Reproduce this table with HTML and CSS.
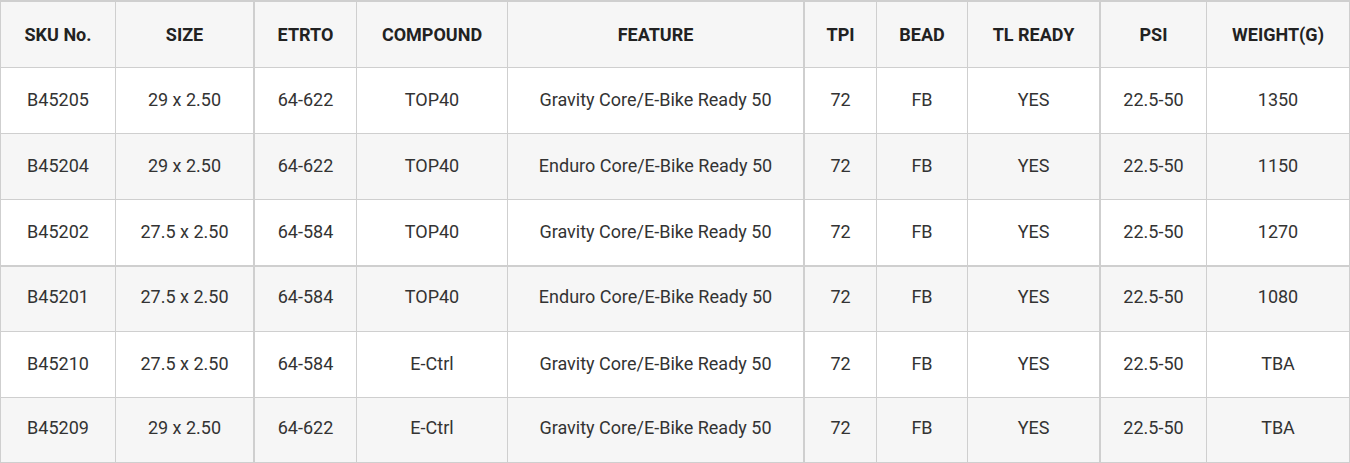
FILE: index.html
```html
<!DOCTYPE html>
<html lang="en">
<head>
<meta charset="utf-8">
<title>Tire specifications</title>
<link rel="stylesheet" href="styles.css">
</head>
<body>
<table class="spec">
  <colgroup>
    <col class="c1"><col class="c2"><col class="c3"><col class="c4"><col class="c5">
    <col class="c6"><col class="c7"><col class="c8"><col class="c9"><col class="c10">
  </colgroup>
  <thead>
    <tr class="r-head">
      <th>SKU No.</th><th class="thick">SIZE</th><th>ETRTO</th><th>COMPOUND</th><th class="thick">FEATURE</th>
      <th>TPI</th><th>BEAD</th><th class="thick">TL READY</th><th>PSI</th><th>WEIGHT(G)</th>
    </tr>
  </thead>
  <tbody>
    <tr class="r-a">
      <td>B45205</td><td class="thick">29 x 2.50</td><td>64-622</td><td>TOP40</td><td class="thick">Gravity Core/E-Bike Ready 50</td>
      <td>72</td><td>FB</td><td class="thick">YES</td><td>22.5-50</td><td>1350</td>
    </tr>
    <tr class="r-a alt">
      <td>B45204</td><td class="thick">29 x 2.50</td><td>64-622</td><td>TOP40</td><td class="thick">Enduro Core/E-Bike Ready 50</td>
      <td>72</td><td>FB</td><td class="thick">YES</td><td>22.5-50</td><td>1150</td>
    </tr>
    <tr class="r-b">
      <td>B45202</td><td class="thick">27.5 x 2.50</td><td>64-584</td><td>TOP40</td><td class="thick">Gravity Core/E-Bike Ready 50</td>
      <td>72</td><td>FB</td><td class="thick">YES</td><td>22.5-50</td><td>1270</td>
    </tr>
    <tr class="r-c alt">
      <td>B45201</td><td class="thick">27.5 x 2.50</td><td>64-584</td><td>TOP40</td><td class="thick">Enduro Core/E-Bike Ready 50</td>
      <td>72</td><td>FB</td><td class="thick">YES</td><td>22.5-50</td><td>1080</td>
    </tr>
    <tr class="r-a">
      <td>B45210</td><td class="thick">27.5 x 2.50</td><td>64-584</td><td>E-Ctrl</td><td class="thick">Gravity Core/E-Bike Ready 50</td>
      <td>72</td><td>FB</td><td class="thick">YES</td><td>22.5-50</td><td>TBA</td>
    </tr>
    <tr class="r-c alt">
      <td>B45209</td><td class="thick">29 x 2.50</td><td>64-622</td><td>E-Ctrl</td><td class="thick">Gravity Core/E-Bike Ready 50</td>
      <td>72</td><td>FB</td><td class="thick">YES</td><td>22.5-50</td><td>TBA</td>
    </tr>
  </tbody>
</table>
</body>
</html>
```
FILE: styles.css
```css
html, body {
  margin: 0;
  padding: 0;
  background: #ffffff;
}

.spec {
  width: 1350px;
  table-layout: fixed;
  border-collapse: separate;
  border-spacing: 0;
  border-top: 2px solid #cfcfcf;
  border-left: 1px solid #cfcfcf;
  font-family: Roboto, "Liberation Sans", Arial, sans-serif;
  font-size: 18px;
  color: #333333;
}

.c1 { width: 115px; }
.c2 { width: 139px; }
.c3 { width: 102px; }
.c4 { width: 151px; }
.c5 { width: 297px; }
.c6 { width: 72px; }
.c7 { width: 91px; }
.c8 { width: 133px; }
.c9 { width: 106px; }
.c10 { width: 143px; }

.spec th,
.spec td {
  box-sizing: border-box;
  padding: 0 4px;
  text-align: center;
  vertical-align: middle;
  border-right: 1px solid #cfcfcf;
  border-bottom: 1px solid #cfcfcf;
  white-space: nowrap;
}

.spec th {
  font-weight: 700;
  color: #222222;
  background: #f6f6f6;
}

.spec td {
  padding-bottom: 2px;
}

.spec .thick {
  border-right-width: 2px;
}

.r-head th { height: 66px; }
.r-a td { height: 66px; }
.r-b td { height: 67px; border-bottom-width: 2px; }
.spec .r-c td { height: 65px; padding-bottom: 5px; }

.alt td { background: #f6f6f6; }
```
